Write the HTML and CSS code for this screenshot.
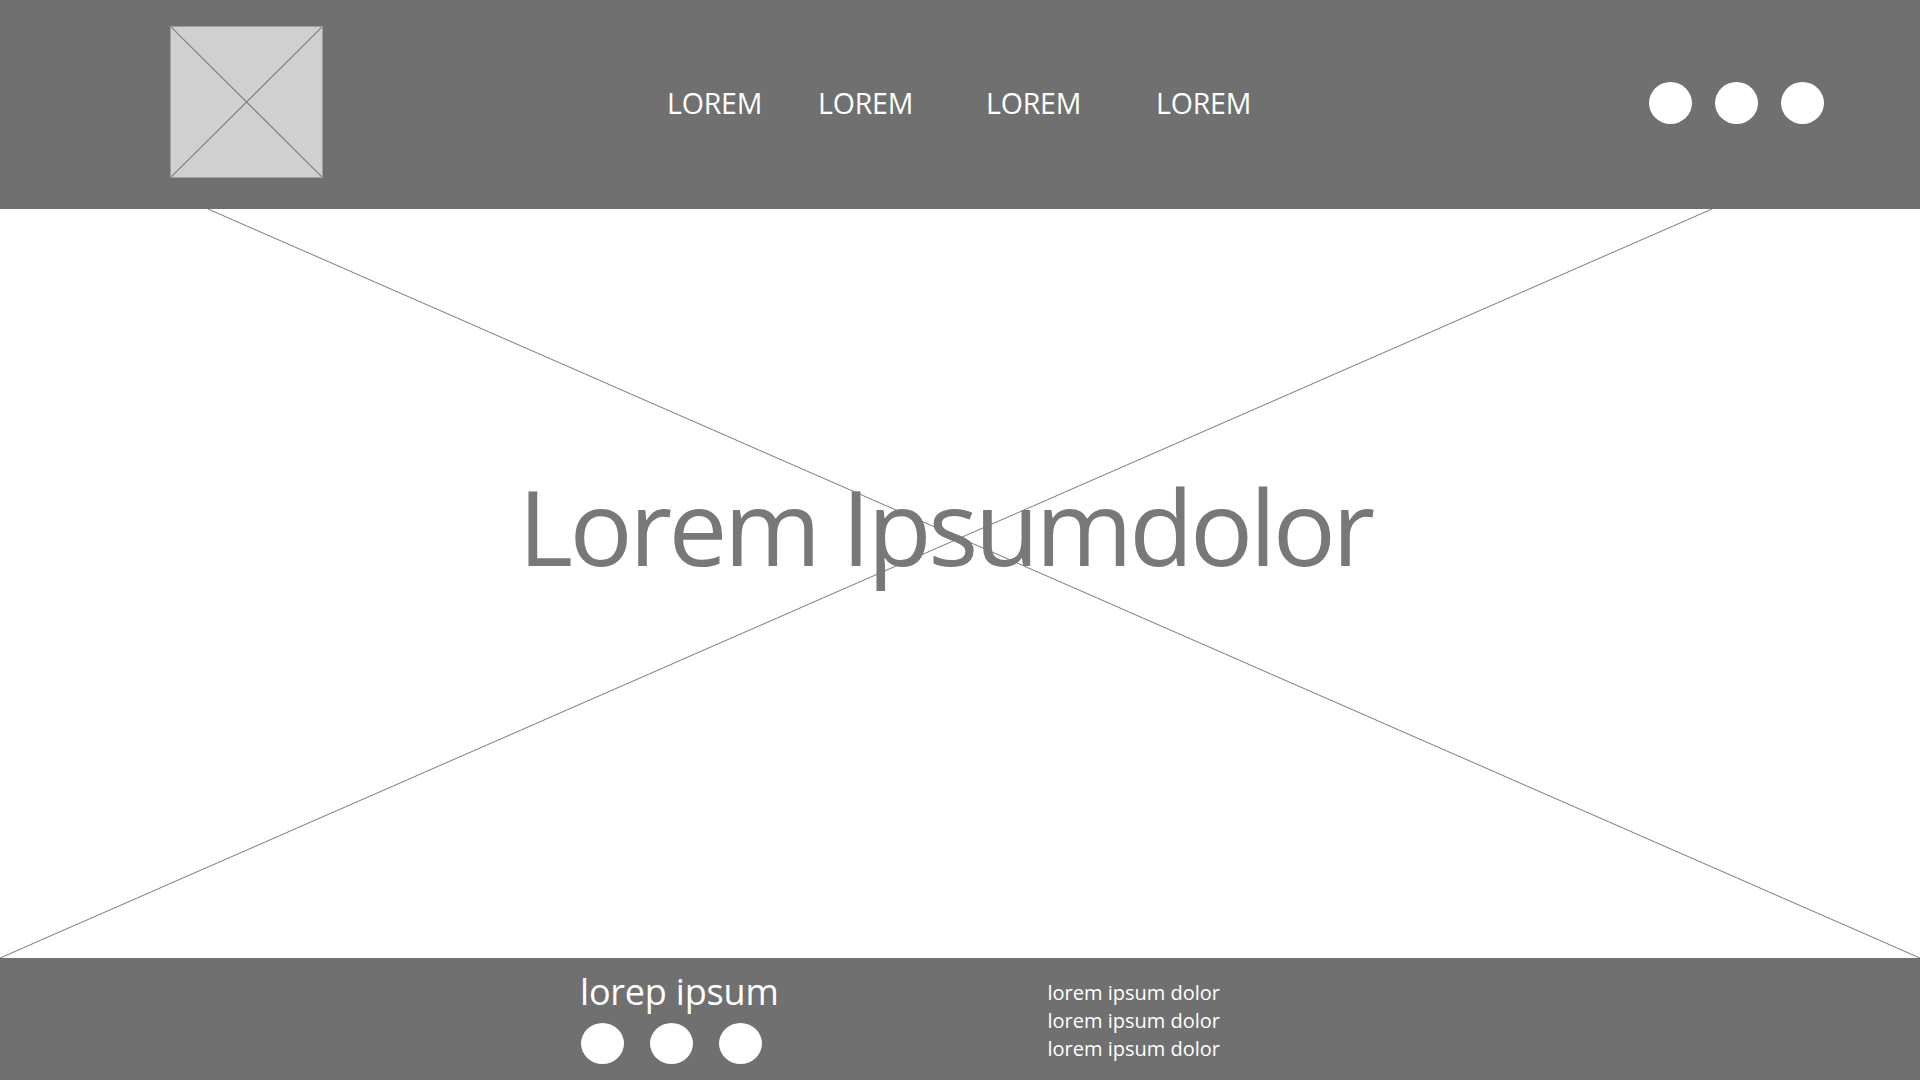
FILE: index.html
```html
<!DOCTYPE html>
<html lang="en">
<head>
<meta charset="utf-8">
<title>Wireframe</title>
<link rel="stylesheet" href="styles.css">
</head>
<body>
<div class="page">
  <header class="topbar">
    <div class="logo">
      <svg class="logo-x" viewBox="0 0 153 151" preserveAspectRatio="none">
        <line x1="0" y1="0" x2="153" y2="151"/>
        <line x1="153" y1="0" x2="0" y2="151"/>
      </svg>
    </div>
    <nav class="nav">
      <a class="nav-item n1">LOREM</a>
      <a class="nav-item n2">LOREM</a>
      <a class="nav-item n3">LOREM</a>
      <a class="nav-item n4">LOREM</a>
    </nav>
    <div class="dots">
      <span class="dot"></span>
      <span class="dot"></span>
      <span class="dot"></span>
    </div>
  </header>
  <main class="hero">
    <svg class="hero-x" viewBox="0 0 1920 749" preserveAspectRatio="none">
      <line x1="208" y1="0" x2="1920" y2="749"/>
      <line x1="1712" y1="0" x2="0" y2="749"/>
    </svg>
    <h1 class="hero-title">Lorem Ipsumdolor</h1>
  </main>
  <footer class="footer">
    <div class="foot-left">
      <div class="foot-title">lorep ipsum</div>
      <div class="foot-dots">
        <span class="fdot"></span>
        <span class="fdot"></span>
        <span class="fdot"></span>
      </div>
    </div>
    <div class="foot-links">
      <div class="foot-line">lorem ipsum dolor</div>
      <div class="foot-line">lorem ipsum dolor</div>
      <div class="foot-line">lorem ipsum dolor</div>
    </div>
  </footer>
</div>
</body>
</html>
```

FILE: styles.css
```css
html, body {
  margin: 0;
  padding: 0;
  background: #ffffff;
}

body {
  font-family: "Open Sans", "Noto Sans", "Liberation Sans", sans-serif;
  overflow: hidden;
}

.page {
  width: 1920px;
  height: 1080px;
  display: flex;
  flex-direction: column;
}

/* ---------- header ---------- */
.topbar {
  height: 209px;
  flex: 0 0 209px;
  background: #707070;
  display: flex;
  align-items: center;
  box-sizing: border-box;
  padding-left: 170px;
  padding-right: 96px;
}

.logo {
  width: 153px;
  height: 152px;
  box-sizing: border-box;
  background: #d0d0d0;
  border: 1px solid #a0a0a0;
  margin-bottom: 5px;
  position: relative;
}

.logo-x {
  display: block;
  width: 100%;
  height: 100%;
}

.logo-x line {
  stroke: #808080;
  stroke-width: 1.2;
  vector-effect: non-scaling-stroke;
}

.nav {
  display: flex;
  margin-left: 344px;
  margin-bottom: 4px;
}

.nav-item {
  color: #ffffff;
  font-size: 28.5px;
  line-height: 40px;
  letter-spacing: -0.2px;
  text-decoration: none;
}

.n1 { width: 151px; }
.n2 { width: 168px; }
.n3 { width: 170px; }
.n4 { width: auto; }

.dots {
  margin-left: auto;
  display: flex;
  gap: 23px;
  margin-bottom: 4px;
}

.dot {
  width: 43px;
  height: 42px;
  border-radius: 50%;
  background: #ffffff;
}

/* ---------- hero ---------- */
.hero {
  position: relative;
  flex: 1 1 auto;
  display: flex;
  align-items: center;
  justify-content: center;
  background: #ffffff;
}

.hero-x {
  position: absolute;
  left: 0;
  top: 0;
  width: 100%;
  height: 100%;
}

.hero-x line {
  stroke: #7c7c7c;
  stroke-width: 1;
}

.hero-title {
  position: relative;
  margin: 0 30px 116px 0;
  font-weight: 400;
  font-size: 105px;
  letter-spacing: -3.5px;
  line-height: 1;
  color: #787878;
}

/* ---------- footer ---------- */
.footer {
  height: 122px;
  flex: 0 0 122px;
  background: #707070;
  display: flex;
  align-items: flex-start;
  box-sizing: border-box;
  padding-left: 580px;
  color: #ffffff;
}

.foot-left {
  display: flex;
  flex-direction: column;
  padding-top: 10px;
}

.foot-title {
  font-size: 36px;
  line-height: 48px;
  letter-spacing: -0.2px;
}

.foot-dots {
  display: flex;
  gap: 26px;
  margin-top: 7px;
  padding-left: 1px;
}

.fdot {
  width: 43px;
  height: 41px;
  border-radius: 50%;
  background: #ffffff;
}

.foot-links {
  margin-left: 269px;
  padding-top: 21px;
}

.foot-line {
  font-size: 20px;
  line-height: 28px;
}
```
